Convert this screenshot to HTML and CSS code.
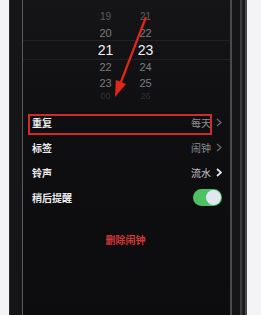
FILE: index.html
```html
<!DOCTYPE html>
<html>
<head>
<meta charset="utf-8">
<link rel="stylesheet" href="styles.css">
</head>
<body>
<div class="phone">
  <div class="screen">
    <div class="picker">
      <div class="col">
        <div class="n far">19</div>
        <div class="n">20</div>
        <div class="n sel">21</div>
        <div class="n">22</div>
        <div class="n">23</div>
        <div class="n faint">00</div>
      </div>
      <div class="col">
        <div class="n far">21</div>
        <div class="n">22</div>
        <div class="n sel">23</div>
        <div class="n">24</div>
        <div class="n">25</div>
        <div class="n faint">26</div>
      </div>
      <div class="selline top"></div>
      <div class="selline bottom"></div>
    </div>
    <div class="list">
      <div class="row">
        <span class="label">重复</span>
        <span class="value">每天<svg class="chev" width="6" height="9" viewBox="0 0 6 9"><polyline points="1,1 5,4.5 1,8" fill="none" stroke="#6e6e72" stroke-width="1.2"/></svg></span>
      </div>
      <div class="row">
        <span class="label">标签</span>
        <span class="value">闹钟<svg class="chev" width="6" height="9" viewBox="0 0 6 9"><polyline points="1,1 5,4.5 1,8" fill="none" stroke="#6e6e72" stroke-width="1.2"/></svg></span>
      </div>
      <div class="row">
        <span class="label">铃声</span>
        <span class="value light">流水<svg class="chev" width="6" height="9" viewBox="0 0 6 9"><polyline points="1,1 5,4.5 1,8" fill="none" stroke="#e4e4e8" stroke-width="1.8"/></svg></span>
      </div>
      <div class="row">
        <span class="label">稍后提醒</span>
        <span class="toggle"><span class="knob"></span></span>
      </div>
      <div class="highlight"></div>
    </div>
    <div class="delete">删除闹钟</div>
    <svg class="arrow" width="50" height="100" viewBox="0 0 50 100">
      <line x1="38" y1="17" x2="12.8" y2="82.5" stroke="#e3261c" stroke-width="2.2"/>
      <polygon points="7,97 7.8,80 18,84" fill="#e3261c"/>
    </svg>
  </div>
</div>
</body>
</html>
```
FILE: styles.css
```css
html, body {
  margin: 0;
  padding: 0;
  background: #f4f3f5;
  width: 261px;
  height: 315px;
  overflow: hidden;
}
.phone {
  margin-left: 9px;
  width: 238px;
  height: 315px;
  background: #151517;
  border-left: 1px solid #2a2a2c;
  box-sizing: border-box;
  display: flex;
  box-shadow: inset -2px 0 0 #4a4a4e, inset -5px 0 0 #1c1c1e, inset -7px 0 0 #3e3e42;
}
.screen {
  position: relative;
  margin-left: 12px;
  width: 210px;
  height: 315px;
  box-sizing: border-box;
  border-left: 1px solid #5a5a5e;
  border-right: 2px solid #4a4a4e;
  background: linear-gradient(180deg, #151517 0%, #0f0f11 40%, #0c0c0e 100%);
  font-family: "Noto Sans CJK SC", "Noto Sans", sans-serif;
}
.picker {
  position: relative;
  height: 101px;
  padding-top: 9px;
  box-sizing: border-box;
  display: flex;
  justify-content: center;
  gap: 18px;
  padding-right: 2px;
}
.col {
  width: 22px;
  display: flex;
  flex-direction: column;
  align-items: center;
  font-family: "Liberation Sans", Arial, sans-serif;
}
.n {
  height: 16px;
  line-height: 16px;
  font-size: 11px;
  color: #7c7c80;
}
.n.far { color: #5c5c60; font-size: 10px; }
.n.faint {
  color: #303033;
  font-size: 9px;
  height: 10px;
  line-height: 10px;
}
.n.sel {
  height: 18px;
  line-height: 18px;
  font-size: 14px;
  color: #f2f2f4;
}
.selline {
  position: absolute;
  left: 0;
  right: 0;
  height: 1px;
  background: #222225;
}
.selline.top { top: 40px; }
.selline.bottom { top: 59px; }
.list {
  position: relative;
  margin-top: 9px;
  padding: 0 8px 0 9px;
}
.row {
  height: 25px;
  display: flex;
  align-items: center;
  justify-content: space-between;
}
.label {
  font-size: 10px;
  font-weight: 700;
  color: #ececee;
}
.value {
  display: flex;
  align-items: center;
  gap: 5px;
  font-size: 10px;
  color: #8e8e92;
}
.value.light { color: #c4c4c8; }
.chev { display: block; }
.toggle {
  width: 29px;
  height: 17px;
  border-radius: 9px;
  background: #4fc163;
  position: relative;
  display: block;
}
.knob {
  position: absolute;
  right: 1px;
  top: 1px;
  width: 15px;
  height: 15px;
  border-radius: 50%;
  background: #e2e6f0;
}
.highlight {
  position: absolute;
  left: 5px;
  top: 4px;
  width: 184px;
  height: 21px;
  box-sizing: border-box;
  border: 2px solid #cf2a2c;
}
.delete {
  margin-top: 22px;
  text-align: center;
  font-size: 10px;
  font-weight: 700;
  color: #d23838;
  padding-right: 2px;
}
.arrow {
  position: absolute;
  left: 85px;
  top: 0;
}
```
